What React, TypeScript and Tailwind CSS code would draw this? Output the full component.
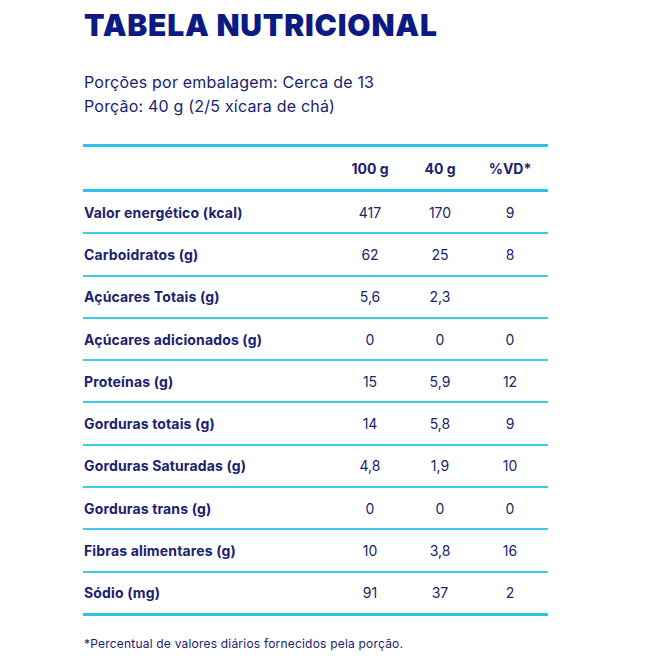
import React from "react";

const rows: [string, string, string, string][] = [
  ["Valor energético (kcal)", "417", "170", "9"],
  ["Carboidratos (g)", "62", "25", "8"],
  ["Açúcares Totais (g)", "5,6", "2,3", ""],
  ["Açúcares adicionados (g)", "0", "0", "0"],
  ["Proteínas (g)", "15", "5,9", "12"],
  ["Gorduras totais (g)", "14", "5,8", "9"],
  ["Gorduras Saturadas (g)", "4,8", "1,9", "10"],
  ["Gorduras trans (g)", "0", "0", "0"],
  ["Fibras alimentares (g)", "10", "3,8", "16"],
  ["Sódio (mg)", "91", "37", "2"],
];

export default function App() {
  return (
    <div
      className="w-[660px] h-[660px] bg-white pl-[83px] text-[#1b2270]"
      style={{ fontFamily: "Inter, 'Noto Sans', sans-serif" }}
    >
      <h1 className="pt-[10px] text-[30px] leading-[30px] font-black tracking-[0.8px] text-[#0c1a84] pl-[1px]">
        TABELA NUTRICIONAL
      </h1>
      <div className="mt-[30px] pl-[1px] text-[16px] leading-[24px] tracking-[0.2px]">
        <p>Porções por embalagem: Cerca de 13</p>
        <p>Porção: 40 g (2/5 xícara de chá)</p>
      </div>
      <div className="mt-[26px] w-[465px]">
        <div className="grid grid-cols-[1fr_70px_70px_70px] pr-[3px] h-[48px] items-center border-t-[3px] border-b-[3px] border-[#2bc3ea] text-[14px] font-bold">
          <div />
          <div className="text-center">100 g</div>
          <div className="text-center">40 g</div>
          <div className="text-center">%VD*</div>
        </div>
        {rows.map((r, i) => (
          <div
            key={r[0]}
            className={
              "grid grid-cols-[1fr_70px_70px_70px] pr-[3px] items-center text-[14px] " +
              (i === rows.length - 1
                ? "h-[43px] border-b-[3px] border-[#2bc3ea]"
                : "h-[42.3px] border-b-2 border-[#3ecbee]")
            }
          >
            <div className="pl-[1px] font-bold tracking-[0.15px]">{r[0]}</div>
            <div className="text-center">{r[1]}</div>
            <div className="text-center">{r[2]}</div>
            <div className="text-center">{r[3]}</div>
          </div>
        ))}
        <p className="mt-[20px] pl-[1px] text-[12px] leading-[16px] tracking-[0.2px]">
          *Percentual de valores diários fornecidos pela porção.
        </p>
      </div>
    </div>
  );
}
